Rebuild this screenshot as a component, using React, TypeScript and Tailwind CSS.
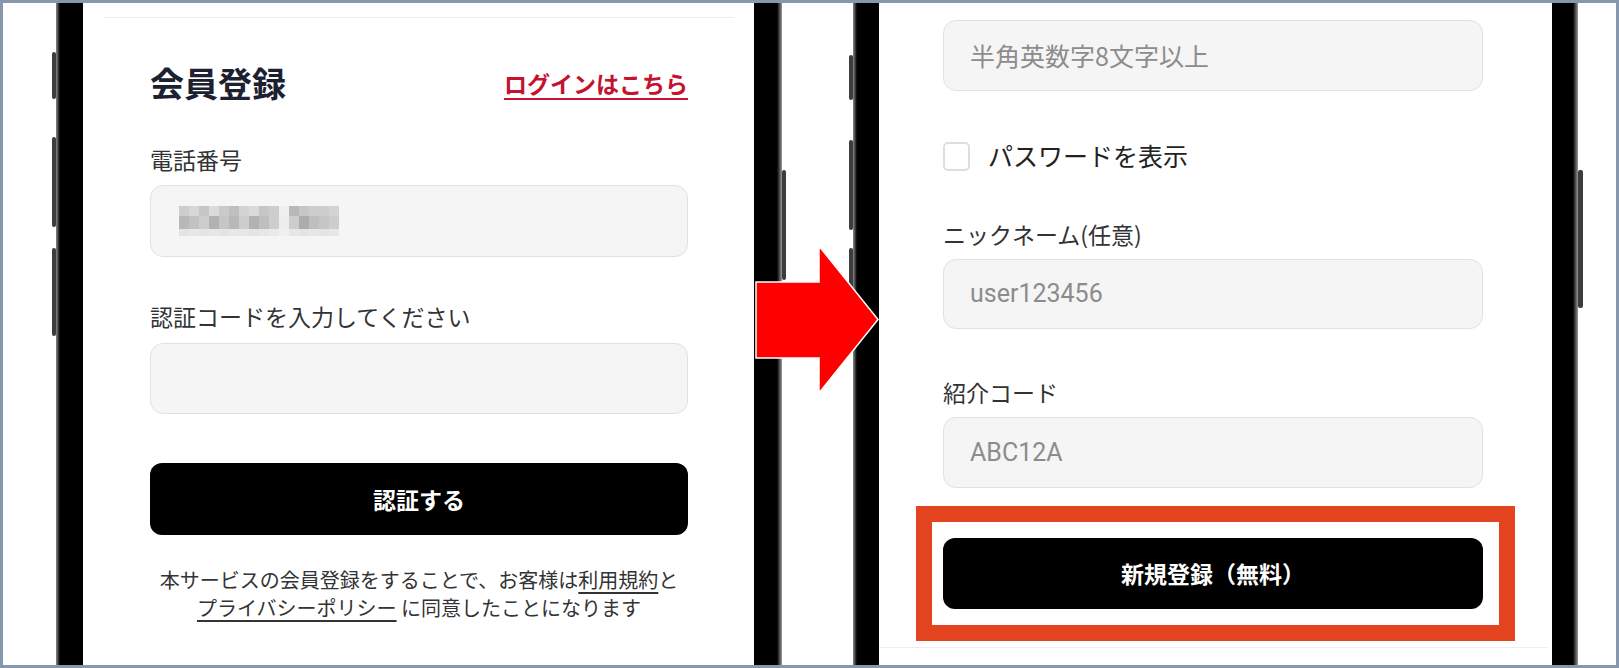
import React from "react";

/**
 * Before / after comparison of a sign-up flow on two phone screens.
 * Left: phone + SMS code step. Right: password / nickname / referral step,
 * with the submit button highlighted.
 */

const JP = "font-['Noto_Sans_CJK_JP','Noto_Sans',sans-serif]";
const LATIN = "font-['Roboto','Noto_Sans_CJK_JP',sans-serif]";

// pixelated (blurred) phone number, opacity per 10px cell
const BLUR_ROWS = [
  [0.3, 0.22, 0.35, 0.2, 0.32, 0.4, 0.25, 0.2, 0.35, 0.3, 0.04, 0.45, 0.35, 0.3, 0.3, 0.25],
  [0.45, 0.38, 0.3, 0.5, 0.35, 0.45, 0.3, 0.5, 0.4, 0.3, 0.06, 0.3, 0.55, 0.4, 0.35, 0.3],
  [0.12, 0.1, 0.12, 0.1, 0.12, 0.1, 0.1, 0.12, 0.1, 0.08, 0.03, 0.1, 0.12, 0.1, 0.12, 0.1],
];
const BLUR_H = [10, 13, 7];

function BlurredNumber() {
  let y = 0;
  return (
    <svg width="160" height="30" viewBox="0 0 160 30">
      {BLUR_ROWS.map((row, r) => {
        const top = y;
        y += BLUR_H[r];
        return row.map((o, c) => (
          <rect key={`${r}-${c}`} x={c * 10} y={top} width="10" height={BLUR_H[r]} fill="#6f6f6f" opacity={o} />
        ));
      })}
    </svg>
  );
}

function Field({ className, children }: { className: string; children?: React.ReactNode }) {
  return (
    <div className={`flex items-center rounded-[13px] border border-[#e1e1e1] bg-[#f5f5f5] ${className}`}>
      {children}
    </div>
  );
}

function Label({ className, children }: { className: string; children: React.ReactNode }) {
  return <div className={`text-[23px] leading-[32px] text-[#333333] ${className}`}>{children}</div>;
}

function SideButton({ className }: { className: string }) {
  return <div className={`rounded-[2px] bg-[#3d3d3d] ${className}`} />;
}

export default function App() {
  return (
    <div className={`relative flex h-[668px] w-[1619px] overflow-hidden border-[3px] border-[#8797ad] bg-white ${JP}`}>
      {/* left phone side buttons */}
      <div className="ml-[49px] flex w-[4px] flex-col">
        <SideButton className="mt-[49px] h-[47px]" />
        <SideButton className="mt-[38px] h-[90px]" />
        <SideButton className="mt-[21px] h-[88px]" />
      </div>
      <div className="w-[27px] bg-[linear-gradient(to_right,#8a8a8a,#000_4px)]" />

      {/* left screen */}
      <div className="flex w-[671px] flex-col bg-white">
        <div className="ml-[21px] mr-[20px] mt-[14px] h-px bg-[#ededed]" />
        <div className="ml-[67px] mr-[66px] flex flex-col">
          <div className="mt-[45px] flex h-[40px] items-center justify-between">
            <h1 className="text-[34px] font-bold leading-[40px] text-[#1c2131]">会員登録</h1>
            <a className="text-[23px] font-bold leading-[32px] text-[#c4122f] underline decoration-2 underline-offset-[5px]">
              ログインはこちら
            </a>
          </div>

          <Label className="mt-[40px]">電話番号</Label>
          <Field className="mt-[10px] h-[72px] pl-[28px]">
            <BlurredNumber />
          </Field>

          <Label className="mt-[43px]">認証コードを入力してください</Label>
          <Field className="mt-[11px] h-[71px]" />

          <button className="mt-[49px] flex h-[72px] items-center justify-center rounded-[12px] bg-black text-[23px] font-bold text-white">
            認証する
          </button>

          <p className="mt-[31px] text-center text-[20px] leading-[28px] text-[#333333]">
            本サービスの会員登録をすることで、お客様は<span className="underline underline-offset-4">利用規約</span>と
            <br />
            <span className="underline underline-offset-4">プライバシーポリシー</span> に同意したことになります
          </p>
        </div>
      </div>

      <div className="w-[28px] bg-[linear-gradient(to_left,#9a9a9a,#000_5px)]" />
      <div className="w-[4px]">
        <SideButton className="mt-[167px] h-[110px]" />
      </div>

      {/* right phone side buttons */}
      <div className="ml-[63px] flex w-[4px] flex-col">
        <SideButton className="mt-[52px] h-[45px]" />
        <SideButton className="mt-[40px] h-[90px]" />
        <SideButton className="mt-[18px] h-[88px]" />
      </div>
      <div className="w-[26px] bg-[linear-gradient(to_right,#8a8a8a,#000_4px)]" />

      {/* right screen */}
      <div className="flex w-[673px] flex-col bg-white">
        <div className="ml-[64px] mr-[69px] flex flex-col">
          <Field className="mt-[17px] h-[71px] pl-[26px]">
            <span className="text-[25px] text-[#8c8c8c]">半角英数字8文字以上</span>
          </Field>

          <div className="mt-[49px] flex h-[32px] items-center gap-[18px]">
            <div className="h-[29px] w-[27px] rounded-[5px] border-2 border-[#dedede] bg-white" />
            <span className="text-[25px] text-[#222222]">パスワードを表示</span>
          </div>

          <Label className="mt-[46px]">ニックネーム(任意)</Label>
          <Field className="mt-[9px] h-[70px] pl-[26px]">
            <span className={`text-[25px] text-[#8c8c8c] ${LATIN}`}>user123456</span>
          </Field>

          <Label className="mt-[47px]">紹介コード</Label>
          <Field className="mt-[9px] h-[71px] pl-[26px]">
            <span className={`text-[25px] text-[#8c8c8c] ${LATIN}`}>ABC12A</span>
          </Field>

          {/* highlighted submit */}
          <div className="-ml-[27px] -mr-[32px] mt-[18px] border-[16px] border-[#e4431f] bg-white py-[16px] pl-[11px] pr-[16px]">
            <button className="flex h-[71px] w-full items-center justify-center rounded-[12px] bg-black text-[23px] font-bold text-white">
              新規登録（無料）
            </button>
          </div>
        </div>
        <div className="mr-[5px] mt-[6px] h-px bg-[#ededed]" />
      </div>

      <div className="w-[26px] bg-[linear-gradient(to_left,#9a9a9a,#000_5px)]" />
      <div className="w-[5px]">
        <SideButton className="mt-[167px] h-[138px]" />
      </div>

      {/* arrow between the two screens */}
      <svg className="absolute left-[751px] top-[241px]" width="126" height="151" viewBox="0 0 126 151">
        <polygon
          points="2,38 65,38 65,2 124,75.5 65,149 65,114 2,114"
          fill="#ff0000"
          stroke="#ffffff"
          strokeWidth="1.5"
          strokeLinejoin="miter"
        />
      </svg>
    </div>
  );
}
